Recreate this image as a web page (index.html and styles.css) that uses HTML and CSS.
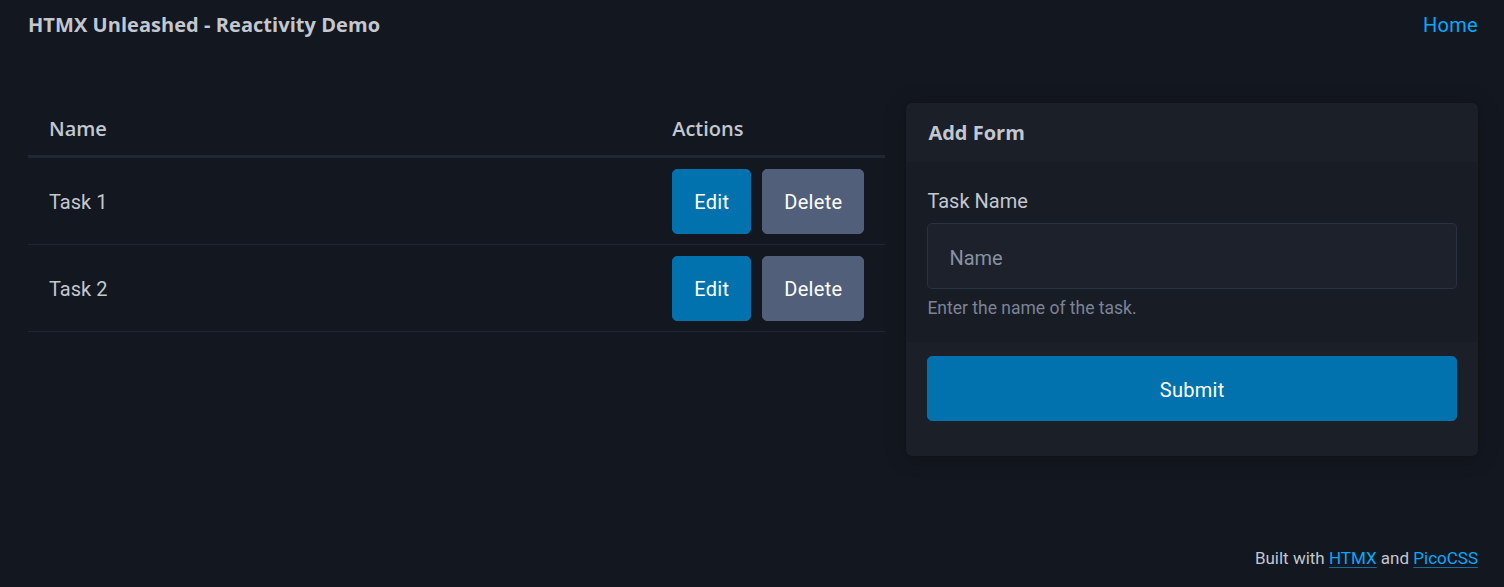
FILE: index.html
```html
<!DOCTYPE html>
<html lang="en">
<head>
<meta charset="utf-8">
<title>HTMX Unleashed - Reactivity Demo</title>
<link rel="stylesheet" href="styles.css">
</head>
<body>
<div class="page">
  <nav class="nav">
    <strong class="brand">HTMX Unleashed - Reactivity Demo</strong>
    <a class="nav-link" href="#">Home</a>
  </nav>
  <main class="main">
    <section class="list">
      <table class="tasks">
        <thead>
          <tr>
            <th class="col-name">Name</th>
            <th class="col-actions">Actions</th>
          </tr>
        </thead>
        <tbody>
          <tr>
            <td class="cell-name">Task 1</td>
            <td class="cell-actions">
              <div class="actions">
                <button class="btn btn-primary">Edit</button>
                <button class="btn btn-secondary">Delete</button>
              </div>
            </td>
          </tr>
          <tr>
            <td class="cell-name">Task 2</td>
            <td class="cell-actions">
              <div class="actions">
                <button class="btn btn-primary">Edit</button>
                <button class="btn btn-secondary">Delete</button>
              </div>
            </td>
          </tr>
        </tbody>
      </table>
    </section>
    <article class="card">
      <header class="card-header">Add Form</header>
      <div class="card-body">
        <label class="label" for="task">Task Name</label>
        <input class="input" id="task" type="text" placeholder="Name">
        <small class="helper">Enter the name of the task.</small>
      </div>
      <footer class="card-footer">
        <button class="btn btn-primary btn-block">Submit</button>
      </footer>
    </article>
  </main>
  <footer class="site-footer">
    Built with <a class="ext-link" href="#">HTMX</a> and <a class="ext-link" href="#">PicoCSS</a>
  </footer>
</div>
</body>
</html>
```

FILE: styles.css
```css
* { box-sizing: border-box; }

html, body {
  margin: 0;
  padding: 0;
  height: 100%;
}

body {
  background: #13171f;
  color: #c2c7d0;
  font-family: Roboto, "Liberation Sans", sans-serif;
  font-size: 20px;
  line-height: 30px;
}

.page {
  min-height: 100vh;
  display: flex;
  flex-direction: column;
  padding: 0 26px 0 28px;
}

.nav {
  height: 49px;
  display: flex;
  align-items: center;
  justify-content: space-between;
}

.brand {
  font-family: "Open Sans", Roboto, sans-serif;
  font-weight: 700;
  color: #c2c7d0;
  font-size: 20px;
  letter-spacing: 0.05px;
}

.nav-link {
  color: #01aaff;
  text-decoration: none;
  letter-spacing: 0.3px;
}

.main {
  margin-top: 54px;
  display: grid;
  grid-template-columns: 3fr 2fr;
  gap: 21px;
  align-items: start;
}

.tasks {
  width: 100%;
  border-collapse: collapse;
  border-spacing: 0;
}

.tasks th {
  text-align: left;
  font-family: "Open Sans", Roboto, sans-serif;
  font-weight: 600;
  color: #c2c7d0;
  padding: 11px 20px 11px 21px;
  border-bottom: 3px solid #202632;
}

.col-actions {
  width: 1%;
  white-space: nowrap;
}

.tasks td {
  padding: 11px 21px 10px 21px;
  border-bottom: 1px solid #202632;
  vertical-align: middle;
}

.cell-actions {
  white-space: nowrap;
}

.actions {
  display: flex;
  gap: 11px;
}

.btn {
  font-family: inherit;
  font-size: 20px;
  line-height: 31px;
  padding: 17px 21px 15px 21px;
  letter-spacing: 0.3px;
  border: 1px solid transparent;
  border-radius: 5px;
  cursor: pointer;
  color: #fff;
}

.btn-primary {
  background: #0172ad;
  border-color: #0172ad;
}

.btn-secondary {
  background: #525f7a;
  border-color: #525f7a;
}

.btn-block {
  width: 100%;
  display: block;
  padding-top: 18px;
  padding-bottom: 14px;
}

.card {
  background: #181c25;
  border-radius: 6px;
  box-shadow: 0 2px 20px rgba(0, 0, 0, 0.25), 0 0 1px rgba(0, 0, 0, 0.4);
  overflow: hidden;
}

.card-header {
  background: #1a1f28;
  font-family: "Open Sans", Roboto, sans-serif;
  padding: 15px 21px 14px 22px;
  font-weight: 700;
  color: #c2c7d0;
}

.card-body {
  padding: 24px 21px 22px 21px;
  display: flex;
  flex-direction: column;
}

.label {
  display: block;
  color: #c2c7d0;
  margin-bottom: 7px;
}

.input {
  display: block;
  width: 100%;
  font-family: inherit;
  font-size: 20px;
  line-height: 30px;
  height: 66px;
  padding: 19px 21px 15px 21px;
  background: #1c212c;
  border: 1px solid #2a3140;
  border-radius: 5px;
  color: #c2c7d0;
  outline: none;
}

.input::placeholder {
  color: #8891a4;
}

.helper {
  display: block;
  margin-top: 6px;
  margin-bottom: -1px;
  font-size: 17.5px;
  line-height: 26px;
  color: #7b8495;
}

.card-footer {
  background: #1a1f28;
  padding: 14px 21px 35px 21px;
}

.site-footer {
  margin-top: auto;
  text-align: right;
  font-size: 17px;
  line-height: 26px;
  padding-bottom: 16px;
  color: #c2c7d0;
}

.ext-link {
  color: #01aaff;
  text-decoration: underline;
  text-decoration-color: rgba(1, 170, 255, 0.6);
  text-underline-offset: 3px;
}
```
